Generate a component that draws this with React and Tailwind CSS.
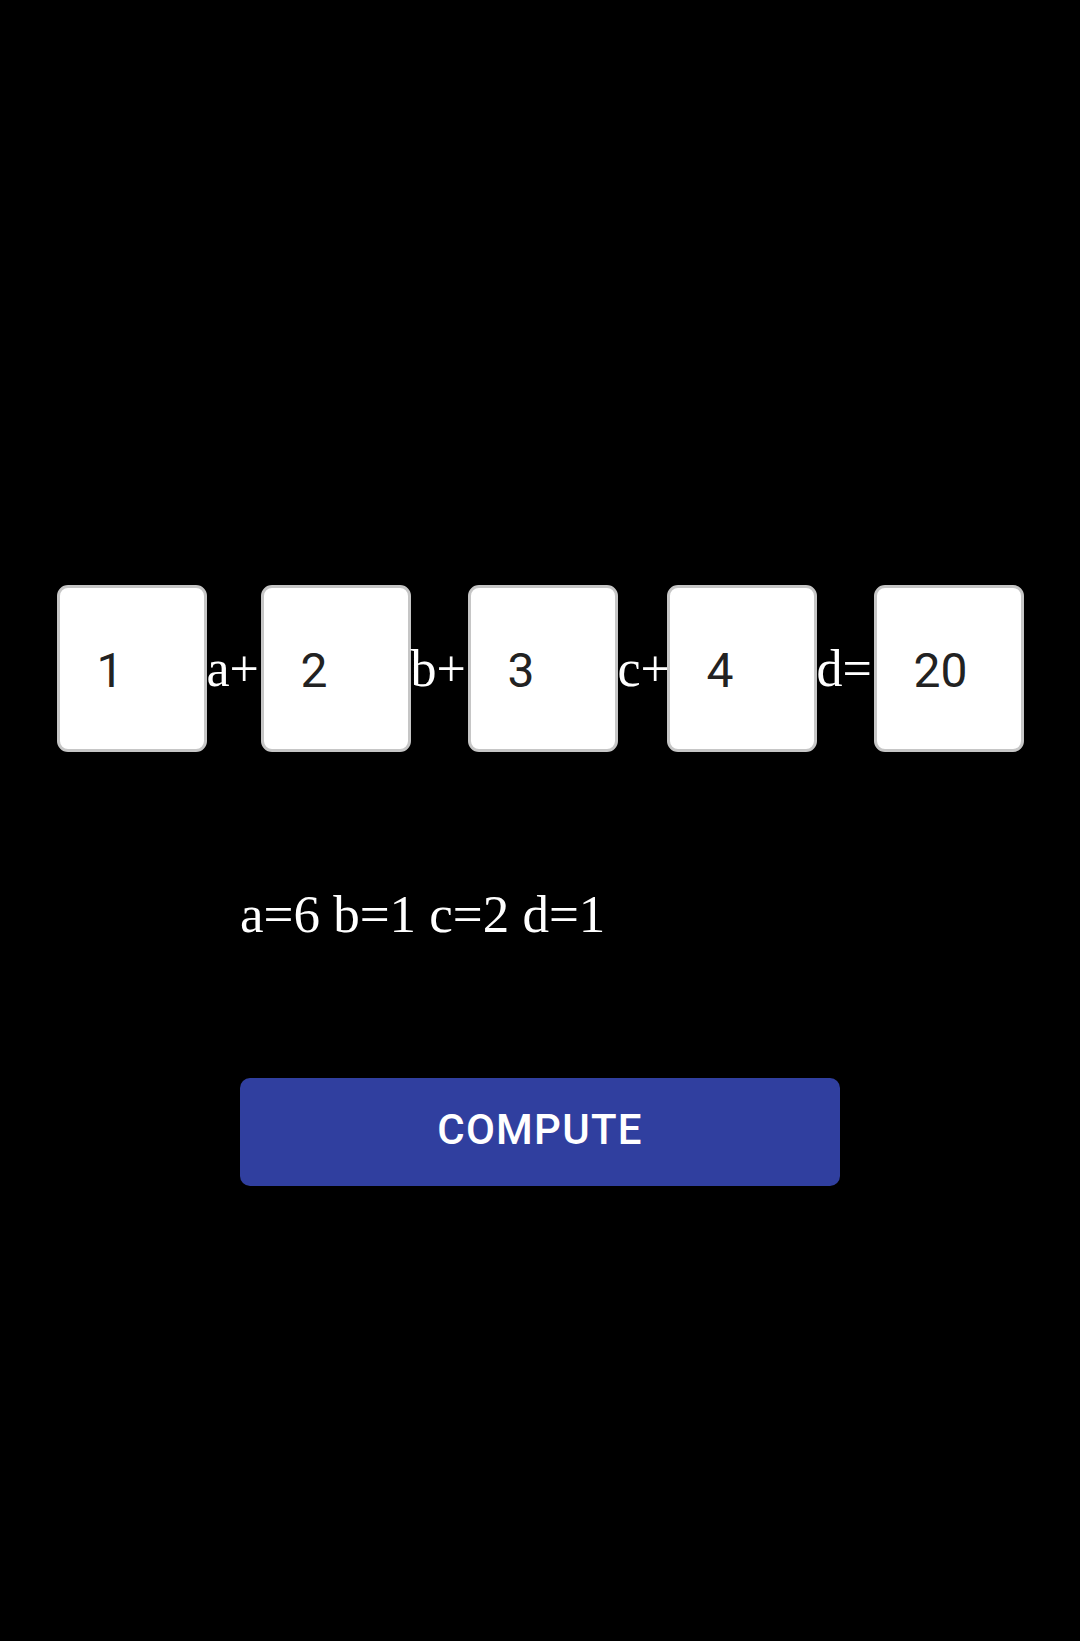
import React, { useState } from "react";

const Box = ({ value, onChange }) => (
  <input
    type="text"
    value={value}
    onChange={(e) => onChange(e.target.value)}
    className="w-[150px] h-[167px] shrink-0 bg-white border-[3px] border-[#c6c6c6] rounded-[11px] pl-[37px] pr-2 pt-[3px] font-['Roboto','Noto_Sans',sans-serif] text-[48px] text-[#222222] outline-none"
  />
);

const Label = ({ children, w }) => (
  <span className={`${w} shrink-0 font-['Liberation_Serif',serif] text-[52px] leading-none text-white whitespace-nowrap`}>
    {children}
  </span>
);

export default function App() {
  const [vals, setVals] = useState({ a: "1", b: "2", c: "3", d: "4", r: "20" });
  const [result, setResult] = useState("a=6 b=1 c=2 d=1");

  const set = (k) => (v) => setVals((prev) => ({ ...prev, [k]: v }));

  // brute force small non-negative solutions
  const compute = () => {
    const A = +vals.a, B = +vals.b, C = +vals.c, D = +vals.d, R = +vals.r;
    for (let a = 0; a <= 20; a++)
      for (let b = 0; b <= 20; b++)
        for (let c = 0; c <= 20; c++)
          for (let d = 0; d <= 20; d++)
            if (A * a + B * b + C * c + D * d === R) {
              setResult(`a=${a} b=${b} c=${c} d=${d}`);
              return;
            }
    setResult("no solution");
  };

  return (
    <div className="min-h-[1641px] w-full bg-black flex flex-col items-center pt-[585px]">
      <div className="flex items-center justify-center">
        <Box value={vals.a} onChange={set("a")} />
        <Label w="w-[54px]">a+</Label>
        <Box value={vals.b} onChange={set("b")} />
        <Label w="w-[57px]">b+</Label>
        <Box value={vals.c} onChange={set("c")} />
        <Label w="w-[49px]">c+</Label>
        <Box value={vals.d} onChange={set("d")} />
        <Label w="w-[57px]">d=</Label>
        <Box value={vals.r} onChange={set("r")} />
      </div>

      <div className="w-[600px] mt-[136px]">
        <p className="font-['Liberation_Serif',serif] text-[53px] leading-none text-white">
          {result}
        </p>
        <button
          type="button"
          onClick={compute}
          className="w-full h-[108px] mt-[137px] pb-[5px] bg-[#303f9f] rounded-[10px] font-['Roboto','Noto_Sans',sans-serif] text-white text-[42px] font-medium tracking-[0.03em] uppercase"
        >
          Compute
        </button>
      </div>
    </div>
  );
}
